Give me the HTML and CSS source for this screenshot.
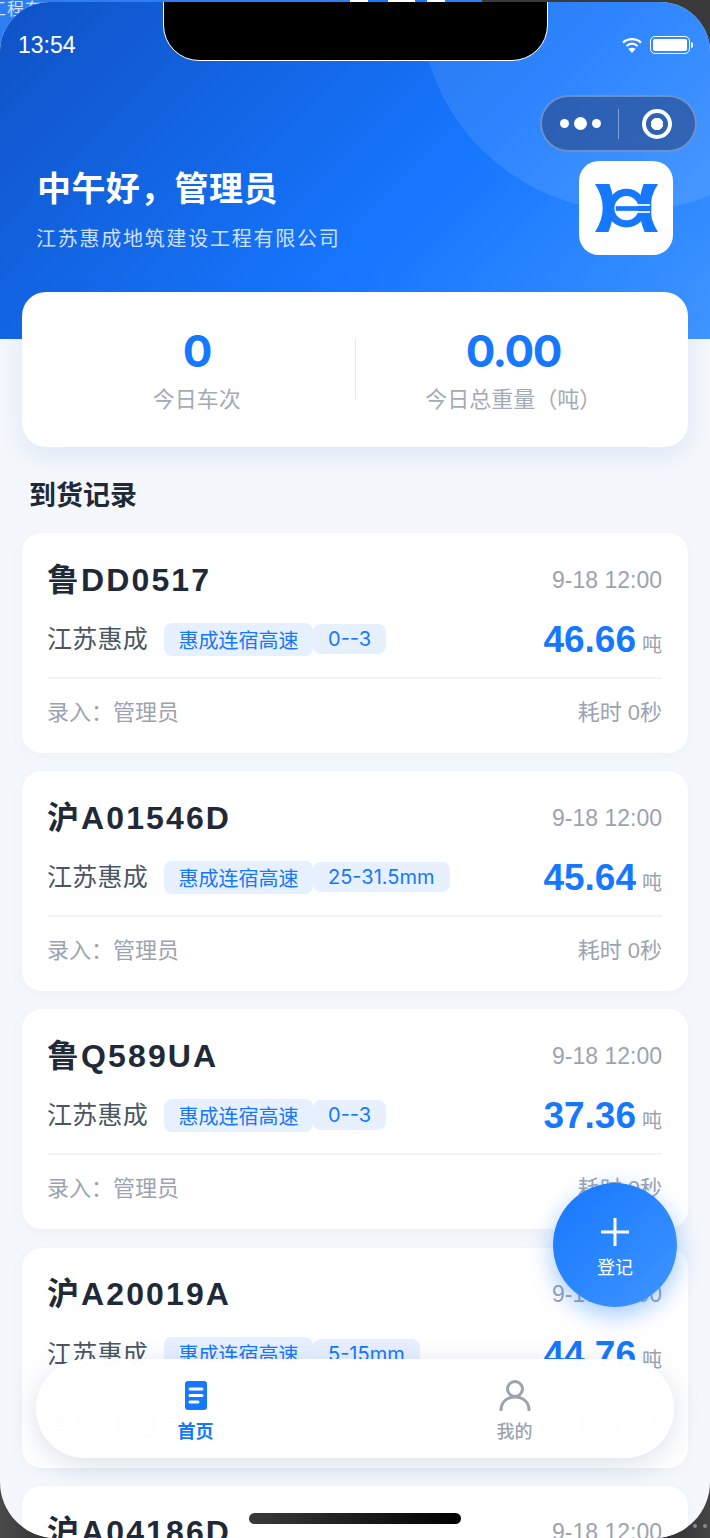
FILE: index.html
```html
<!DOCTYPE html>
<html lang="en">
<head>
    <meta charset="UTF-8" />
    <meta name="viewport" content="width=device-width, initial-scale=1.0" />
    <title>到货记录</title>
    <link rel="stylesheet" href="styles.css">
</head>
<body>
    <div class="behind-text">工程有</div>
    <div class="behind-strip"></div>
    <div class="behind-dots"><i></i><i></i></div>

    <div class="screen">
        <div class="notch"></div>

        <header class="hero">
            <div class="hero-circle"></div>
            <div class="status-bar">
                <span class="clock">13:54</span>
                <div class="status-icons">
                    <svg class="wifi" viewBox="0 0 20 16">
                        <path d="M1 5.6C6 1 14 1 19 5.6" fill="none" stroke="#fff" stroke-width="2.2" />
                        <path d="M4.4 9C8 6 12 6 15.6 9" fill="none" stroke="#fff" stroke-width="2.2" />
                        <path d="M10 16L6.4 12C8.6 10.4 11.4 10.4 13.6 12Z" fill="#fff" />
                    </svg>
                    <div class="battery"><div class="battery-level"></div></div>
                    <div class="battery-nub"></div>
                </div>
            </div>
            <div class="hero-row">
                <div class="hero-text">
                    <h1>中午好，管理员</h1>
                    <p>江苏惠成地筑建设工程有限公司</p>
                </div>
                <div class="logo">
                    <svg viewBox="72 100 188 143">
                        <path d="M72 100H115Q142 172 112 243H72Q118 172 72 100Z" fill="#1677ff" />
                        <path d="M260 100H217Q190 172 220 243H260Q214 172 260 100Z" fill="#1677ff" />
                        <circle cx="166" cy="172" r="58" fill="#1677ff" />
                        <circle cx="166" cy="172" r="36" fill="#fff" />
                        <path d="M226 155L240 120V225L226 190Z" fill="#1677ff" />
                        <rect x="134" y="166" width="102" height="14" fill="#1677ff" />
                        <rect x="150" y="160" width="86" height="5" fill="#fff" />
                        <rect x="150" y="181" width="86" height="5" fill="#fff" />
                    </svg>
                </div>
            </div>
        </header>

        <div class="capsule">
            <div class="capsule-dots"><i></i><i class="big"></i><i></i></div>
            <div class="capsule-line"></div>
            <div class="capsule-ring"></div>
        </div>

        <main class="content">
            <section class="stats">
                <div class="stat">
                    <div class="stat-value">0</div>
                    <div class="stat-label">今日车次</div>
                </div>
                <div class="stat-divider"></div>
                <div class="stat">
                    <div class="stat-value">0.00</div>
                    <div class="stat-label">今日总重量（吨）</div>
                </div>
            </section>

            <h2 class="section-title">到货记录</h2>

            <article class="record">
                <div class="record-top">
                    <span class="plate">鲁DD0517</span>
                    <span class="record-time">9-18 12:00</span>
                </div>
                <div class="record-mid">
                    <span class="supplier">江苏惠成</span>
                    <span class="tag">惠成连宿高速</span>
                    <span class="tag tag-spec">0--3</span>
                    <span class="weight">46.66<small>吨</small></span>
                </div>
                <div class="record-foot">
                    <span>录入：管理员</span>
                    <span>耗时 0秒</span>
                </div>
            </article>

            <article class="record">
                <div class="record-top">
                    <span class="plate">沪A01546D</span>
                    <span class="record-time">9-18 12:00</span>
                </div>
                <div class="record-mid">
                    <span class="supplier">江苏惠成</span>
                    <span class="tag">惠成连宿高速</span>
                    <span class="tag tag-spec">25-31.5mm</span>
                    <span class="weight">45.64<small>吨</small></span>
                </div>
                <div class="record-foot">
                    <span>录入：管理员</span>
                    <span>耗时 0秒</span>
                </div>
            </article>

            <article class="record">
                <div class="record-top">
                    <span class="plate">鲁Q589UA</span>
                    <span class="record-time">9-18 12:00</span>
                </div>
                <div class="record-mid">
                    <span class="supplier">江苏惠成</span>
                    <span class="tag">惠成连宿高速</span>
                    <span class="tag tag-spec">0--3</span>
                    <span class="weight">37.36<small>吨</small></span>
                </div>
                <div class="record-foot">
                    <span>录入：管理员</span>
                    <span>耗时 0秒</span>
                </div>
            </article>

            <article class="record">
                <div class="record-top">
                    <span class="plate">沪A20019A</span>
                    <span class="record-time">9-18 12:00</span>
                </div>
                <div class="record-mid">
                    <span class="supplier">江苏惠成</span>
                    <span class="tag">惠成连宿高速</span>
                    <span class="tag tag-spec">5-15mm</span>
                    <span class="weight">44.76<small>吨</small></span>
                </div>
                <div class="record-foot">
                    <span>录入：管理员</span>
                    <span>耗时 0秒</span>
                </div>
            </article>

            <article class="record">
                <div class="record-top">
                    <span class="plate">沪A04186D</span>
                    <span class="record-time">9-18 12:00</span>
                </div>
            </article>
        </main>

        <button class="fab">
            <svg viewBox="0 0 30 30"><path d="M15 1V29M1 15H29" stroke="#fff" stroke-width="3" fill="none" /></svg>
            <span>登记</span>
        </button>

        <nav class="tabbar">
            <div class="tab tab-active">
                <svg viewBox="0 0 32 31">
                    <rect x="5" y="1" width="22" height="29" rx="3" fill="#1677ff" />
                    <path d="M10 9H22M10 15.5H22M10 22H18" stroke="#fff" stroke-width="3" stroke-linecap="round" fill="none" />
                </svg>
                <span>首页</span>
            </div>
            <div class="tab">
                <svg viewBox="0 0 32 31">
                    <circle cx="16" cy="9" r="7.5" fill="none" stroke="#9ca3af" stroke-width="3" />
                    <path d="M2 30C2 22 8 17 16 17S30 22 30 30" fill="none" stroke="#9ca3af" stroke-width="3" stroke-linecap="round" />
                </svg>
                <span>我的</span>
            </div>
        </nav>

        <div class="home-bar"></div>
    </div>
</body>
</html>
```

FILE: styles.css
```css
/* Global Styles */
* {
    box-sizing: border-box;
}

body {
    margin: 0;
    height: 1538px;
    overflow: hidden;
    position: relative;
    font-family: "Liberation Sans", "Noto Sans CJK SC", sans-serif;
    background: linear-gradient(90deg, #4a4a4a, #222 12%, #222 88%, #444) 0 60px no-repeat,
        linear-gradient(90deg, #2f7df2 482px, #3a3a3a 482px);
}

/* What shows around the phone corners */
.behind-text {
    position: absolute;
    left: -11px;
    top: -1px;
    font-size: 17px;
    line-height: 22px;
    letter-spacing: 1px;
    color: #cfe2ff;
}

.behind-strip {
    position: absolute;
    left: 350px;
    top: 0;
    width: 95px;
    height: 2px;
    background: linear-gradient(90deg, #fff 18px, #1677ff 18px 38px, #fff 38px 65px, #1677ff 65px 77px, #fff 77px);
}

.behind-dots {
    position: absolute;
    right: 3px;
    bottom: 10px;
    display: flex;
    gap: 6px;
}

.behind-dots i {
    width: 4px;
    height: 4px;
    border-radius: 50%;
    background-color: #8a8a8a;
}

.screen {
    position: relative;
    height: 1536px;
    margin-top: 2px;
    border-radius: 50px 50px 56px 56px;
    overflow: hidden;
    background-color: #f4f7fb;
}

.notch {
    position: absolute;
    left: 163px;
    top: -4px;
    z-index: 5;
    width: 385px;
    height: 63px;
    background-color: #000;
    border: 1.5px solid #fff;
    border-radius: 0 0 36px 36px;
}

/* Hero */
.hero {
    position: relative;
    height: 337px;
    overflow: hidden;
    color: #fff;
    background: linear-gradient(135deg, #0f52c4 0%, #1677ff 60%, #4096ff 100%);
}

.hero-circle {
    position: absolute;
    left: 420px;
    top: -211px;
    width: 420px;
    height: 420px;
    border-radius: 50%;
    background-color: rgba(255, 255, 255, 0.1);
}

.status-bar {
    position: relative;
    display: flex;
    justify-content: space-between;
    align-items: center;
    height: 30px;
    margin-top: 28px;
    padding: 0 17px 0 18px;
}

.clock {
    font-size: 23px;
}

.status-icons {
    display: flex;
    align-items: center;
}

.wifi {
    width: 20px;
    height: 16px;
    margin-right: 8px;
}

.battery {
    width: 40px;
    height: 18px;
    padding: 2px;
    border: 1.5px solid #fff;
    border-radius: 5px;
}

.battery-level {
    height: 100%;
    background-color: #fff;
    border-radius: 2px;
}

.battery-nub {
    width: 2px;
    height: 6px;
    margin-left: 1px;
    background-color: #fff;
    border-radius: 0 2px 2px 0;
}

.hero-row {
    position: relative;
    display: flex;
    justify-content: space-between;
    align-items: flex-start;
    margin-top: 101px;
    padding: 0 37px 0 37px;
}

.hero-text {
    padding-top: 6px;
}

.hero-text h1 {
    margin: 0 0 14px;
    font-size: 34px;
    line-height: 44px;
    font-weight: bold;
    letter-spacing: 0.4px;
}

.hero-text p {
    margin: 0 0 0 -1px;
    font-size: 20px;
    line-height: 28px;
    letter-spacing: 1.75px;
    color: rgba(255, 255, 255, 0.8);
}

.logo {
    display: flex;
    justify-content: center;
    align-items: center;
    width: 94px;
    height: 94px;
    background-color: #fff;
    border-radius: 20px;
}

.logo svg {
    width: 63px;
    height: 48px;
}

/* WeChat capsule */
.capsule {
    position: absolute;
    left: 540px;
    top: 93px;
    display: flex;
    align-items: center;
    width: 157px;
    height: 57px;
    background-color: rgba(40, 70, 130, 0.6);
    border: 2px solid rgba(255, 255, 255, 0.3);
    border-radius: 29px;
}

.capsule-dots {
    display: flex;
    align-items: center;
    gap: 5px;
    margin-left: 18px;
}

.capsule-dots i {
    width: 9px;
    height: 9px;
    border-radius: 50%;
    background-color: #fff;
}

.capsule-dots i.big {
    width: 13px;
    height: 13px;
}

.capsule-line {
    width: 1px;
    height: 30px;
    margin-left: 17px;
    background-color: rgba(255, 255, 255, 0.4);
}

.capsule-ring {
    width: 30px;
    height: 30px;
    margin-left: 23px;
    border: 4px solid #fff;
    border-radius: 50%;
    background: radial-gradient(circle, #fff 0 6px, transparent 6.5px);
}

/* Content */
.content {
    position: relative;
    margin-top: -47px;
    padding: 0 22px;
}

.stats {
    display: flex;
    align-items: center;
    height: 155px;
    padding: 0 17px 2px;
    background-color: #fff;
    border-radius: 24px;
    box-shadow: 0 8px 24px rgba(22, 100, 220, 0.1);
}

.stat {
    flex: 1;
    text-align: center;
}

.stat-value {
    font-family: Inter, "Liberation Sans", sans-serif;
    font-size: 44px;
    line-height: 56px;
    font-weight: bold;
    letter-spacing: -1.5px;
    color: #1677ff;
}

.stat-label {
    margin-top: 6px;
    font-size: 22px;
    line-height: 30px;
    color: #a3abb8;
}

.stat-divider {
    width: 1px;
    height: 60px;
    background-color: #e5e7eb;
}

.section-title {
    margin: 31px 0 19px 7px;
    font-size: 27px;
    line-height: 36px;
    font-weight: bold;
    color: #1f2937;
}

.record {
    height: 220px;
    margin-bottom: 18.2px;
    padding: 26px 26px 0;
    background-color: #fff;
    border-radius: 20px;
    box-shadow: 0 4px 16px rgba(0, 0, 0, 0.03);
}

.record-top {
    display: flex;
    justify-content: space-between;
    align-items: center;
    height: 42px;
}

.plate {
    margin: -7px 0 0 -1px;
    font-size: 32px;
    font-weight: bold;
    letter-spacing: 2.1px;
    color: #1f2937;
}

.record-time {
    font-size: 23px;
    color: #9ca3af;
}

.record-mid {
    display: flex;
    align-items: center;
    height: 44px;
    margin-top: 15px;
    padding-bottom: 2px;
}

.supplier {
    margin: 0 16px 0 -1px;
    font-size: 25px;
    letter-spacing: 0.25px;
    color: #4b5563;
}

.tag {
    margin-top: 4px;
    padding: 2px 14.5px;
    font-size: 20px;
    color: #1677ff;
    background-color: #e6f0ff;
    border-radius: 8px;
}

.tag-spec {
    padding: 3px 15px;
    font-family: Inter, "Liberation Sans", sans-serif;
}

.weight {
    margin: 6px 0 0 auto;
    font-size: 37px;
    font-weight: bold;
    color: #1677ff;
}

.weight small {
    margin-left: 6px;
    font-size: 20px;
    font-weight: normal;
    color: #9ca3af;
}

.record-foot {
    display: flex;
    justify-content: space-between;
    align-items: center;
    height: 64px;
    margin-top: 17px;
    border-top: 2px solid #f3f4f6;
    font-size: 22px;
    color: #9ca3af;
}

.record-foot span:first-child {
    margin-left: -1px;
}

/* Floating bits */
.fab {
    position: absolute;
    left: 553px;
    top: 1181px;
    z-index: 3;
    display: flex;
    flex-direction: column;
    align-items: center;
    width: 124px;
    height: 124px;
    padding: 34px 0 0;
    border: none;
    border-radius: 50%;
    background: linear-gradient(135deg, #1677ff, #4096ff);
    box-shadow: 0 8px 24px rgba(22, 119, 255, 0.4);
    color: #fff;
    font-family: inherit;
    font-size: 18px;
}

.fab svg {
    width: 30px;
    height: 30px;
}

.fab span {
    margin-top: 8px;
    line-height: 26px;
}

.tabbar {
    position: absolute;
    left: 36px;
    top: 1357px;
    z-index: 2;
    display: flex;
    width: 638px;
    height: 99px;
    background-color: rgba(255, 255, 255, 0.98);
    border-radius: 50px;
    box-shadow: 0 6px 28px rgba(30, 60, 120, 0.16);
}

.tab {
    flex: 1;
    display: flex;
    flex-direction: column;
    align-items: center;
    padding-top: 21px;
    font-size: 18px;
    font-weight: 500;
    color: #9ca3af;
}

.tab-active {
    font-weight: bold;
    color: #1677ff;
}

.tab svg {
    height: 31px;
    width: 32px;
}

.tab span {
    margin-top: 8px;
    line-height: 26px;
}

.home-bar {
    position: absolute;
    left: 249px;
    top: 1511px;
    z-index: 4;
    width: 212px;
    height: 11px;
    border-radius: 6px;
    background: linear-gradient(90deg, #3a3a3a, #000);
}
```
